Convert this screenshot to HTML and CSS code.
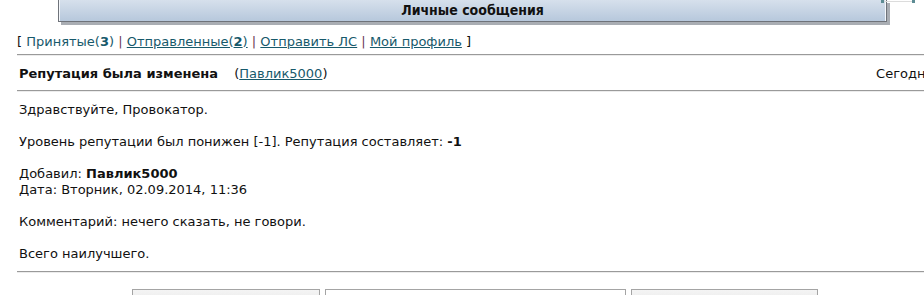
FILE: index.html
```html
<!DOCTYPE html>
<html lang="ru">
<head>
    <meta charset="UTF-8">
    <title>Личные сообщения</title>
    <link rel="stylesheet" href="styles.css">
</head>
<body>
    <!-- Top bar -->
    <div class="topbar">
        <div class="maintitle">Личные сообщения</div>
        <div class="corner">
            <span class="dot"></span>
            <span class="wire"></span>
            <span class="dot"></span>
        </div>
    </div>

    <div class="pm-wrap">
        <!-- PM menu -->
        <div class="pm-menu">
            [ <a href="#" class="current">Принятые(<b>3</b>)</a> <span class="sep">|</span>
            <a href="#">Отправленные(<b>2</b>)</a> <span class="sep">|</span>
            <a href="#">Отправить ЛС</a> <span class="sep">|</span>
            <a href="#">Мой профиль</a> ]
        </div>
        <div class="rule"></div>

        <!-- Message -->
        <div class="msg-head">
            <div><b>Репутация была изменена</b> <span class="from">(<a href="#">Павлик5000</a>)</span></div>
            <div class="date">Сегодня, 12:14</div>
        </div>
        <div class="rule"></div>

        <div class="msg-body">
            <p>Здравствуйте, Провокатор.</p>
            <p>Уровень репутации был понижен [-1]. Репутация составляет: <b>-1</b></p>
            <p>Добавил: <b>Павлик5000</b><br>Дата: Вторник, 02.09.2014, 11:36</p>
            <p>Комментарий: нечего сказать, не говори.</p>
            <p>Всего наилучшего.</p>
        </div>
        <div class="rule"></div>

        <!-- Actions -->
        <div class="pm-actions">
            <button class="btn btn-del">Удалить выбранный</button>
            <input class="field" type="text">
            <button class="btn btn-move">Перенести в другой</button>
        </div>
    </div>
</body>
</html>
```

FILE: styles.css
```css
html, body { overflow: hidden; }
body { margin: 0; padding: 0; font-family: "DejaVu Sans", Verdana, sans-serif; font-size: 13px; color: #111; }

/* Top bar with title */
.topbar { position: relative; height: 26px; }

.maintitle {
    margin-left: 58px;
    width: 827px;
    height: 21px;
    line-height: 21px;
    background: linear-gradient(#d6e0ec, #b7c8dc);
    border-left: 1px solid #6f737a;
    border-right: 1px solid #6f737a;
    border-bottom: 1px solid #6f737a;
    box-shadow: inset 1px 0 0 #f4f7fb, inset -1px 0 0 #f4f7fb, 3px 3px 0 #a9adb3;
    text-align: center;
    font-family: "DejaVu Sans Condensed", "DejaVu Sans", sans-serif;
    font-weight: bold;
    font-size: 14px;
    color: #111;
}

/* little bit of something at the top right */
.corner { position: absolute; top: 0; left: 881px; height: 4px; display: flex; align-items: flex-start; }
.corner .dot { display: block; width: 3px; height: 3px; background: #5d8c94; }
.corner .wire { display: block; width: 28px; height: 1px; background: #dcdcdc; margin-top: 1px; }

.pm-wrap { width: 1000px; padding-left: 17px; }

.pm-menu { height: 22px; line-height: 20px; padding-top: 6px; }
.pm-menu a { color: #17596b; }
.pm-menu a.current { text-decoration: none; }
.pm-menu .sep { color: #6b3a55; }

.rule { border-top: 1px solid #9a9a9a; border-bottom: 1px solid #ececec; height: 0; }

.msg-head { display: flex; justify-content: space-between; height: 34px; line-height: 36px; padding-left: 2px; }
.msg-head .from { margin-left: 12px; }
.msg-head .from a { color: #17596b; }
.msg-head .date { padding-right: 38px; }

.msg-body { padding: 10px 0 9px 2px; }
.msg-body p { margin: 0 0 16px 0; line-height: 16px; }
.msg-body p:last-child { margin-bottom: 0; }

.pm-actions { display: flex; gap: 5px; padding: 16px 0 0 115px; }
.btn {
    width: 188px;
    height: 26px;
    background: linear-gradient(#f4f4f4, #e2e2e2);
    border: 1px solid #a4a4a4;
    font-family: "DejaVu Sans", sans-serif;
    font-size: 13px;
    padding: 0 12px 0 0;
    text-align: right;
    line-height: 14px;
}
.field { width: 299px; height: 24px; border: 1px solid #a4a4a4; padding: 0; }
.btn-move { width: 187px; }
```
